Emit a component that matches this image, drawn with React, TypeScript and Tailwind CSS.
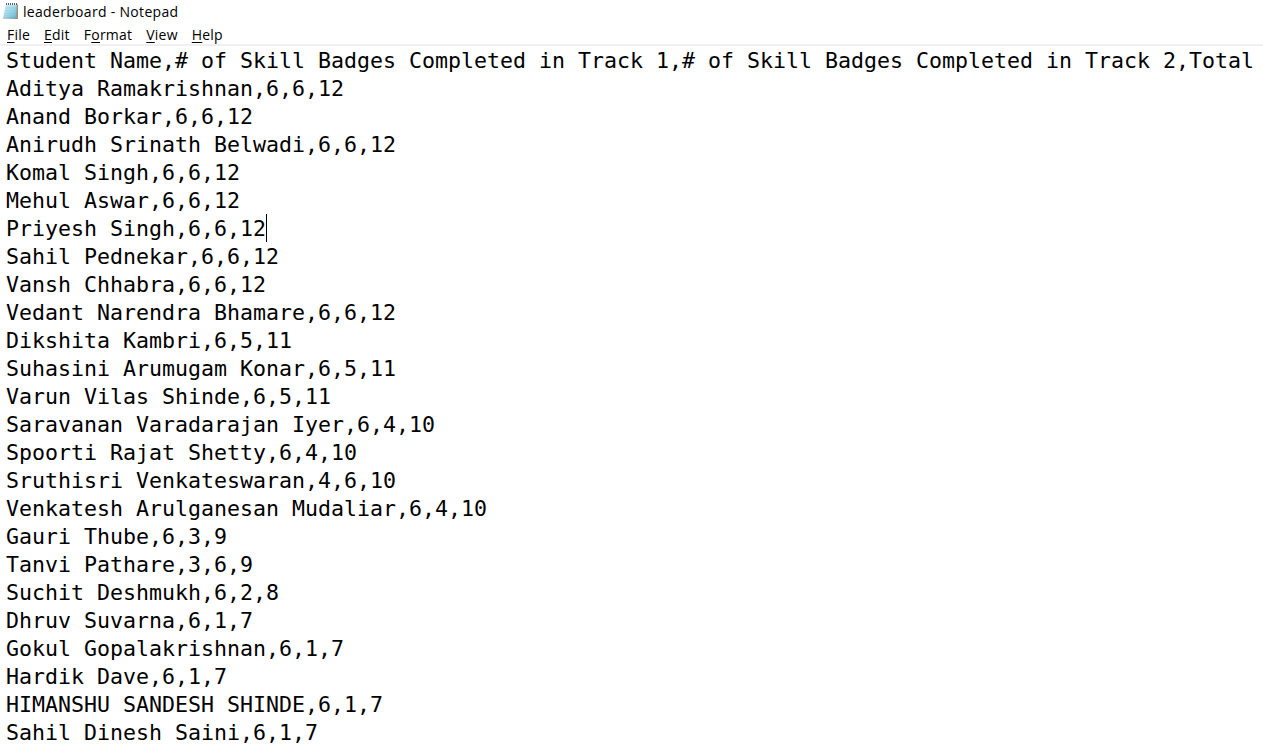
const lines = `Student Name,# of Skill Badges Completed in Track 1,# of Skill Badges Completed in Track 2,Total
Aditya Ramakrishnan,6,6,12
Anand Borkar,6,6,12
Anirudh Srinath Belwadi,6,6,12
Komal Singh,6,6,12
Mehul Aswar,6,6,12
Priyesh Singh,6,6,12
Sahil Pednekar,6,6,12
Vansh Chhabra,6,6,12
Vedant Narendra Bhamare,6,6,12
Dikshita Kambri,6,5,11
Suhasini Arumugam Konar,6,5,11
Varun Vilas Shinde,6,5,11
Saravanan Varadarajan Iyer,6,4,10
Spoorti Rajat Shetty,6,4,10
Sruthisri Venkateswaran,4,6,10
Venkatesh Arulganesan Mudaliar,6,4,10
Gauri Thube,6,3,9
Tanvi Pathare,3,6,9
Suchit Deshmukh,6,2,8
Dhruv Suvarna,6,1,7
Gokul Gopalakrishnan,6,1,7
Hardik Dave,6,1,7
HIMANSHU SANDESH SHINDE,6,1,7
Sahil Dinesh Saini,6,1,7`.split('\n');

const CARET_LINE = 6;

function NotepadIcon() {
  return (
    <svg width="17" height="18" viewBox="0 0 17 18" className="shrink-0">
      <defs>
        <linearGradient id="page" x1="0" y1="0" x2="1" y2="1">
          <stop offset="0" stopColor="#d8f2f8" />
          <stop offset="0.5" stopColor="#a3d9e8" />
          <stop offset="1" stopColor="#58b3cf" />
        </linearGradient>
      </defs>
      <path d="M15 2.5h1V17H4l10-1z" fill="#a8906c" />
      <path d="M3.8 2h11.4l-1 14.2H1z" fill="url(#page)" />
      <path d="M3.5 6h10.8M3.2 8.5h11M2.8 11h11M2.4 13.5h11" stroke="#8bcbdd" strokeWidth="0.5" />
      <path d="M1 16.2h13.2L15.2 2" fill="none" stroke="#7397a2" strokeWidth="0.6" />
      <path d="M3.8 2.4h11.4" stroke="#e6eef0" strokeWidth="1.4" />
      <path d="M4.5 1v2M6.5 1v2M8.5 1v2M10.5 1v2M12.5 1v2M14.5 1v2" stroke="#5b6467" strokeWidth="1" />
    </svg>
  );
}

function MenuItem({ before = '', mnemonic, after }: { before?: string; mnemonic: string; after: string }) {
  return (
    <span>
      {before}
      <span className="underline underline-offset-2">{mnemonic}</span>
      {after}
    </span>
  );
}

export default function App() {
  return (
    <div className="flex h-[748px] w-[1263px] flex-col overflow-hidden bg-white text-black">
      <header className="flex h-[22px] items-center gap-1 pl-[2px] font-['Open_Sans',sans-serif] text-[14px] tracking-[0.31px]">
        <NotepadIcon />
        <span>leaderboard - Notepad</span>
      </header>
      <nav className="flex h-[24px] items-center gap-[14px] border-b-2 border-[#f0f0f0] pl-[7px] pt-[2px] font-['Open_Sans',sans-serif] text-[14px] tracking-[0.22px]">
        <MenuItem mnemonic="F" after="ile" />
        <MenuItem mnemonic="E" after="dit" />
        <MenuItem before="F" mnemonic="o" after="rmat" />
        <MenuItem mnemonic="V" after="iew" />
        <MenuItem mnemonic="H" after="elp" />
      </nav>
      <main className="pl-[6px] pt-px font-['DejaVu_Sans_Mono',monospace] text-[21.6px] leading-[28px]">
        {lines.map((line, i) => (
          <div key={i} className="flex h-7 items-center whitespace-pre">
            <span>{line}</span>
            {i === CARET_LINE && <span className="-mt-[2px] h-7 w-px bg-black" />}
          </div>
        ))}
      </main>
    </div>
  );
}
